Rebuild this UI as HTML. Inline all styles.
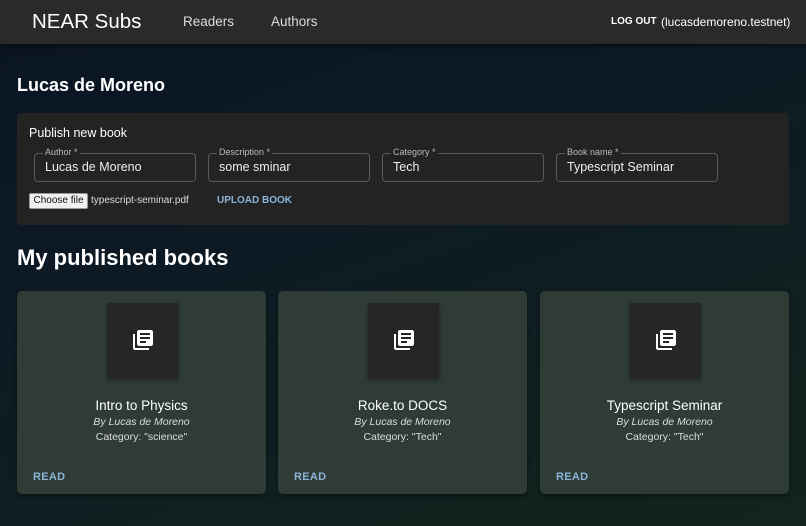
<!DOCTYPE html>
<html><head><style>
*{box-sizing:border-box;margin:0;padding:0}
body{width:806px;height:526px;overflow:hidden;font-family:"Liberation Sans",sans-serif;color:#fff;
background:linear-gradient(160deg,#0a1424 0%,#0d1a24 40%,#12241c 100%);position:relative}
.hdr{position:absolute;left:0;top:0;width:806px;height:44px;background:#2a2a2a;box-shadow:0 2px 4px rgba(0,0,0,.5)}
.abs{position:absolute;white-space:nowrap}
.panel{position:absolute;left:17px;top:113px;width:772px;height:112px;background:#232323;border-radius:4px}
.field{position:absolute;top:153px;width:162px;height:29px;border:1px solid #5a5a5a;border-radius:4px}
.field span{position:absolute;top:-7px;left:8px;background:#232323;padding:0 2px;font-size:9px;color:#bbb}
.field b{position:absolute;left:10px;top:6px;font-weight:normal;font-size:12.5px;color:#eee}
.card{position:absolute;top:291px;width:249px;height:203px;background:#2f3b35;border-radius:5px;box-shadow:0 2px 4px rgba(0,0,0,.4)}
.ic{position:absolute;left:90px;top:12px;width:71px;height:75px;background:#262626;box-shadow:0 2px 4px rgba(0,0,0,.4)}
.ic svg{position:absolute;left:24px;top:25px}
.t{position:absolute;left:0;width:249px;text-align:center}
.read{position:absolute;left:16px;top:180px;font-size:11px;font-weight:bold;color:#8ab4d8;letter-spacing:.3px}
</style></head><body>
<div class="hdr"></div>
<div class="abs" style="left:32px;top:10px;font-size:20.5px;">NEAR Subs</div>
<div class="abs" style="left:183px;top:14px;font-size:13.5px;color:#ddd">Readers</div>
<div class="abs" style="left:271px;top:14px;font-size:13.5px;color:#ddd">Authors</div>
<div class="abs" style="left:611px;top:16px;font-size:10px;font-weight:bold">LOG OUT</div>
<div class="abs" style="left:661px;top:15px;font-size:12px">(lucasdemoreno.testnet)</div>
<div class="abs" style="left:17px;top:75px;font-size:18px;font-weight:bold">Lucas de Moreno</div>
<div class="panel"></div>
<div class="abs" style="left:29px;top:126px;font-size:12.5px">Publish new book</div>
<div class="field" style="left:34px"><span>Author *</span><b>Lucas de Moreno</b></div>
<div class="field" style="left:208px"><span>Description *</span><b>some sminar</b></div>
<div class="field" style="left:382px"><span>Category *</span><b>Tech</b></div>
<div class="field" style="left:556px"><span>Book name *</span><b>Typescript Seminar</b></div>
<div class="abs" style="left:29px;top:193px;width:59px;height:16px;background:#f0f0f0;border:1px solid #999;border-radius:2px;color:#111;font-size:10px;text-align:center;line-height:14px">Choose file</div>
<div class="abs" style="left:91px;top:195px;font-size:10px;color:#ddd">typescript-seminar.pdf</div>
<div class="abs" style="left:217px;top:195px;font-size:10px;font-weight:bold;color:#8ab4d8">UPLOAD BOOK</div>
<div class="abs" style="left:17px;top:245px;font-size:22px;font-weight:bold">My published books</div>
<div class="card" style="left:17px"><div class="ic"><svg width="24" height="24" viewBox="0 0 24 24"><path fill="#fff" d="M4 6H2v14c0 1.1.9 2 2 2h14v-2H4V6zm16-4H8c-1.1 0-2 .9-2 2v12c0 1.1.9 2 2 2h12c1.1 0 2-.9 2-2V4c0-1.1-.9-2-2-2zm-1 9H9V9h10v2zm-4 4H9v-2h6v2zm4-8H9V5h10v2z"/></svg></div>
<div class="t" style="top:107px;font-size:13.5px">Intro to Physics</div><div class="t" style="top:125px;font-size:10.5px;font-style:italic;color:#ddd">By Lucas de Moreno</div><div class="t" style="top:140px;font-size:10.5px;color:#ddd">Category: "science"</div><div class="read">READ</div></div>
<div class="card" style="left:278px"><div class="ic"><svg width="24" height="24" viewBox="0 0 24 24"><path fill="#fff" d="M4 6H2v14c0 1.1.9 2 2 2h14v-2H4V6zm16-4H8c-1.1 0-2 .9-2 2v12c0 1.1.9 2 2 2h12c1.1 0 2-.9 2-2V4c0-1.1-.9-2-2-2zm-1 9H9V9h10v2zm-4 4H9v-2h6v2zm4-8H9V5h10v2z"/></svg></div>
<div class="t" style="top:107px;font-size:13.5px">Roke.to DOCS</div><div class="t" style="top:125px;font-size:10.5px;font-style:italic;color:#ddd">By Lucas de Moreno</div><div class="t" style="top:140px;font-size:10.5px;color:#ddd">Category: "Tech"</div><div class="read">READ</div></div>
<div class="card" style="left:540px"><div class="ic"><svg width="24" height="24" viewBox="0 0 24 24"><path fill="#fff" d="M4 6H2v14c0 1.1.9 2 2 2h14v-2H4V6zm16-4H8c-1.1 0-2 .9-2 2v12c0 1.1.9 2 2 2h12c1.1 0 2-.9 2-2V4c0-1.1-.9-2-2-2zm-1 9H9V9h10v2zm-4 4H9v-2h6v2zm4-8H9V5h10v2z"/></svg></div>
<div class="t" style="top:107px;font-size:13.5px">Typescript Seminar</div><div class="t" style="top:125px;font-size:10.5px;font-style:italic;color:#ddd">By Lucas de Moreno</div><div class="t" style="top:140px;font-size:10.5px;color:#ddd">Category: "Tech"</div><div class="read">READ</div></div>
</body></html>
